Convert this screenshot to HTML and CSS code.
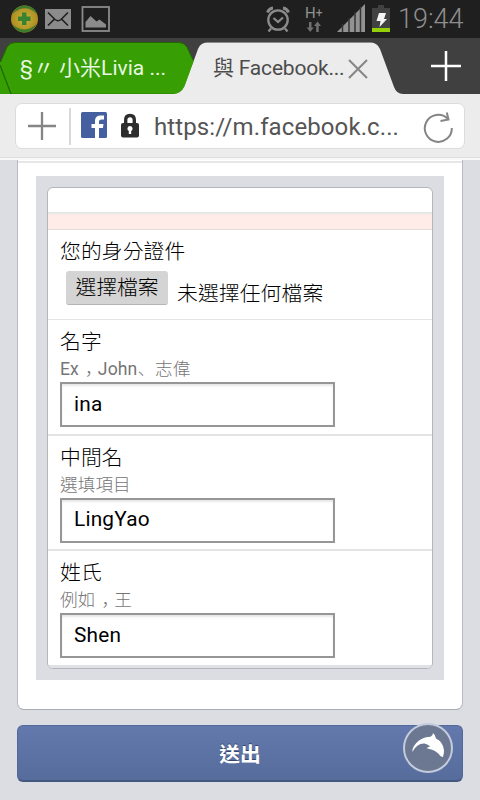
FILE: index.html
```html
<!DOCTYPE html>
<html lang="zh-Hant">
<head>
  <meta charset="UTF-8">
  <meta name="viewport" content="width=device-width, initial-scale=1">
  <title>與 Facebook</title>
  <link rel="stylesheet" href="styles.css">
</head>
<body>
  <header class="status-bar">
    <svg class="status-left" width="120" height="38" viewBox="0 0 120 38">
      <defs>
        <radialGradient id="ball">
          <stop offset="0" stop-color="#c4b83c"/>
          <stop offset="1" stop-color="#b08a20"/>
        </radialGradient>
      </defs>
      <circle cx="24.5" cy="19" r="13.5" fill="url(#ball)"/>
      <path d="M12 15Q16 5 26 5.6Q35 7 37 14Q29 6 20 9Q15 11 12 15ZM37 23Q33 33 23 32.5Q15 31 12 24Q19 31 28 29Q34 27 37 23Z" fill="#3e7b2c"/>
      <path d="M22 12.500h4.500v4h4v4.500h-4v4H22v-4h-4v-4.500h4z" fill="#3a8230"/>
      <rect x="45" y="9" width="26" height="20" fill="#8b8b8b"/>
      <path d="M48 12.5l7 7q3 2.5 6 0l7-7M48 25.5l6-6M68 25.5l-6-6" fill="none" stroke="#1f1f1f" stroke-width="1.6"/>
      <rect x="82.5" y="7" width="26.5" height="24" fill="none" stroke="#8b8b8b" stroke-width="1.8"/>
      <path d="M85.5 27.5v-5.5l5-6 6 5.5 3-2 6.500 5v3z" fill="#8b8b8b"/>
    </svg>
    <div class="status-right">
      <svg width="30" height="38" viewBox="0 0 30 38" fill="none" stroke="#8b8b8b" stroke-width="2.300">
        <circle cx="14" cy="20" r="9.700"/>
        <path d="M9.500 18l4.500 4 5-4.500M7 28.500l-2.500 3M21 28.500l2.500 3"/>
        <path d="M3.500 12.500Q5 8.500 9 8M24.500 12.500Q23 8.500 19 8" stroke-width="3"/>
      </svg>
      <div class="network">
        <span>H<sup>+</sup></span>
        <svg width="16" height="12" viewBox="0 0 16 12" fill="#6f6f6f">
          <path d="M3 1h2.500v5.500h2.300L4.200 11 .7 6.500H3zM10.200 11h2.500V5h2.300L11.500.500 8 5h2.200z"/>
        </svg>
      </div>
      <svg class="signal" width="30" height="28" viewBox="0 0 30 28">
        <path d="M0 28L28 0v28z" fill="#929292"/>
        <path d="M5.500 20v8M12 14v14M18 8v20M23.500 3v25" stroke="#343434" stroke-width="1.500"/>
      </svg>
      <svg class="battery" width="18" height="28" viewBox="0 0 18 28">
        <path d="M6 0h6v3h6v20H0V3h6z" fill="#414141"/>
        <rect y="23" width="18" height="4" fill="#94cf08"/>
        <path d="M7 8h7l-2 6h3L7.500 22l1-6H4.500z" fill="#f4f4f4"/>
      </svg>
      <span class="clock">19:44</span>
    </div>
  </header>

  <nav class="tabs">
    <svg class="tab-shapes" width="480" height="56" viewBox="0 0 480 56">
      <path d="M0 24L11 56H0z" fill="#379e03"/>
      <path d="M.5 24L7 9Q10 4.500 15 4.500H179Q184 4.500 187 9L193 22V56H11.500z" fill="#379e03" stroke="#226602"/>
      <path d="M0 56H173Q181 56 184.500 48L198 11Q200.500 4.500 207 4.500H371Q377 4.500 380 11L394 49Q396.500 56 403 56z" fill="#ececec"/>
      <path d="M0 56V24H150L194 22L184.500 48Q181 55.500 173 55.500H11.500z" fill="#379e03"/>
      <path d="M0 27L11 56" stroke="#226602" stroke-width="1.200"/>
      <path d="M207 4.500H371" stroke="#8a8a8a"/>
    </svg>
    <span class="tab tab-other">§〃 <b>小米Livia ...</b></span>
    <span class="tab tab-active">與 Facebook...</span>
    <svg class="tab-close" width="22" height="22" viewBox="0 0 22 22" stroke="#858585" stroke-width="2">
      <path d="M2 2l18 18M20 2L2 20"/>
    </svg>
    <svg class="tab-new" width="30" height="30" viewBox="0 0 30 30" stroke="#fff" stroke-width="2.500">
      <path d="M0 15h30M15 0v30"/>
    </svg>
  </nav>

  <div class="address">
    <div class="address-box">
      <svg width="28" height="28" viewBox="0 0 28 28" stroke="#858585" stroke-width="2.300">
        <path d="M0 14h28M14 0v28"/>
      </svg>
      <i class="divider"></i>
      <svg class="favicon" width="26" height="26" viewBox="0 0 26 26">
        <rect width="26" height="26" rx="1.500" fill="#4460a0"/>
        <path d="M14 26V16h-3.500v-4H14V9q0-5.500 5.500-5.500H23v4h-2.500Q18 7.500 18 9.500V12h4.500l-.600 4H18v10z" fill="#fff"/>
      </svg>
      <svg class="lock" width="18" height="25" viewBox="0 0 18 25">
        <path d="M4.700 12V7q0-4.500 4.300-4.500t4.300 4.500v5" fill="none" stroke="#2d2d2d" stroke-width="3.400"/>
        <rect y="10" width="18" height="14.500" rx="2" fill="#2d2d2d"/>
        <path d="M9 13a2.600 2.600 0 0 1 1.200 4.900V21H7.800v-3.100A2.600 2.600 0 0 1 9 13z" fill="#fff"/>
      </svg>
      <span class="url">https://m.facebook.c...</span>
      <svg class="reload" width="32" height="34" viewBox="0 0 32 34" fill="none" stroke="#858585" stroke-width="2">
        <path d="M28.800 19A13.500 13.500 0 1 1 24.500 9.500"/>
        <path d="M23.800 3.500L25.500 10.500l-8 1.500"/>
      </svg>
    </div>
  </div>

  <main class="page">
    <div class="card">
      <div class="frame">
        <form class="form">
          <div class="form-head"></div>
          <div class="form-error"></div>
          <div class="row row-file">
            <label>您的身分證件</label>
            <div class="file">
              <button type="button">選擇檔案</button>
              <span>未選擇任何檔案</span>
            </div>
          </div>
          <div class="row">
            <label>名字</label>
            <small><b>Ex</b><i class="comma" lang="ja">，</i><b>John</b><i class="pause" lang="ja">、</i>志偉</small>
            <input type="text" value="ina">
          </div>
          <div class="row">
            <label>中間名</label>
            <small>選填項目</small>
            <input type="text" value="LingYao">
          </div>
          <div class="row row-last">
            <label>姓氏</label>
            <small>例如<i class="comma" lang="ja">，</i>王</small>
            <input type="text" value="Shen">
          </div>
        </form>
      </div>
    </div>
    <button class="submit">送出</button>
    <svg class="dolphin" width="52" height="52" viewBox="0 0 52 52">
      <circle cx="26" cy="26" r="24" fill="#6c7891" stroke="#c3cbdc" stroke-width="2"/>
      <path d="M10.300 30Q10 24 17 18.500Q22 15 28.500 14.800Q31 14 31 11Q33.500 13 34 16.500Q41 20 42 28Q42.200 31 41 35Q39 35 36.300 31.500Q33 28.500 29.500 27.500Q27 27 24.500 26L28 24.500Q26.500 22.500 22.500 21.500Q15 21 10.300 30Z" fill="#fff"/>
    </svg>
  </main>
</body>
</html>
```

FILE: styles.css
```css
* {
  box-sizing: border-box;
}
body {
  margin: 0;
  width: 480px;
  height: 800px;
  overflow: hidden;
  background: #dcdde2;
  font-family: Roboto, "Noto Sans CJK TC", sans-serif;
}
svg {
  display: block;
  flex: none;
}
i {
  font-style: normal;
}

.status-bar {
  height: 38px;
  background: #1f1f1f;
  display: flex;
  justify-content: space-between;
}
.status-right {
  display: flex;
  align-items: flex-start;
  padding-right: 15px;
}
.network {
  width: 20px;
  margin: 5px 12px 0 11px;
  color: #929292;
  font-size: 15px;
  line-height: 16px;
}
.network span {
  display: block;
  white-space: nowrap;
}
.network sup {
  font-size: 12px;
  line-height: 0;
  vertical-align: 1px;
}
.network svg {
  margin-left: 1px;
}
.signal {
  margin-top: 4px;
}
.battery {
  margin: 5px 8px 0 5px;
}
.clock {
  width: 67px;
  color: #8e8e8e;
  font-size: 27px;
  font-weight: 300;
  line-height: 39px;
}

.tabs {
  position: relative;
  height: 56px;
  background: #404040;
  display: flex;
  align-items: center;
}
.tab-shapes {
  position: absolute;
  left: 0;
  top: 0;
}
.tab {
  position: relative;
  font-size: 21px;
  line-height: 30px;
  white-space: nowrap;
  padding-top: 4px;
}
.tab-other {
  width: 193px;
  margin-left: 20px;
  color: #e9f8e2;
}
.tab b,
.row b {
  font-weight: 400;
}
.tab-active {
  width: 134px;
  color: #4c4c4c;
  letter-spacing: -.2px;
}
.tab-close {
  position: relative;
  top: 3px;
}
.tab-new {
  position: relative;
  margin-left: 62px;
}

.address {
  height: 66px;
  padding: 9px 15px 0;
  background: #ececec;
  border-bottom: 2px solid #f8f8f8;
  box-shadow: inset 0 -1px #dedede;
}
.address-box {
  height: 46px;
  padding-left: 12px;
  display: flex;
  align-items: center;
  background: #fff;
  border: 1px solid #dcdcdc;
  border-radius: 7px;
}
.divider {
  width: 2px;
  height: 37px;
  margin: 0 10px 0 13px;
  background: #d9d9d9;
}
.favicon {
  margin-top: -2px;
}
.lock {
  margin: -2px 15px 0 14px;
}
.url {
  width: 268px;
  padding-top: 2px;
  color: #555;
  font-size: 24px;
  letter-spacing: .1px;
  white-space: nowrap;
}
.reload {
  margin-left: 1px;
}

.page {
  position: relative;
  padding: 0 17px;
}
.card {
  height: 550px;
  padding: 13px 18px 0;
  background: linear-gradient(#fff 1px, #e6e6e6 1px, #e6e6e6 3px, #fff 3px);
  border: 1px solid #b9bac2;
  border-top: 0;
  border-radius: 0 0 7px 7px;
  border-bottom-color: #a9aab0;
}
.frame {
  height: 504px;
  margin-top: 3px;
  padding: 11px 11px 0;
  background: #dcdde2;
}
.form {
  width: 386px;
  height: 482px;
  overflow: hidden;
  background: #fff;
  border: 1px solid #b5b6bc;
  border-radius: 6px;
}
.form-head {
  height: 26px;
  border-bottom: 2px solid #e4e8e4;
}
.form-error {
  height: 16px;
  background: #ffebe8;
  border-bottom: 1px solid #e8dcda;
}
.row {
  height: 115.5px;
  padding: 10px 12px 0;
  border-bottom: 2px solid #e4e4e4;
  line-height: 25px;
}
.row label {
  display: block;
  color: #000;
  font-size: 20.8px;
  font-weight: 300;
  letter-spacing: .1px;
}
.row small {
  display: block;
  height: 27px;
  color: #757575;
  font-size: 17.6px;
  font-weight: 300;
  line-height: 28px;
  letter-spacing: .1px;
  white-space: nowrap;
}
.row-file {
  height: 90px;
  border-bottom-width: 1px;
}
.file {
  display: flex;
  padding: 6px 0 0 6px;
  font-size: 20.8px;
  font-weight: 300;
}
.file button {
  width: 102px;
  height: 34px;
  padding: 0;
  font: inherit;
  line-height: 30px;
  background: #d4d4d4;
  border: 0;
  border-bottom: 1px solid #b4b4b4;
  border-radius: 3px;
}
.file span {
  margin: 11px 0 0 9px;
  letter-spacing: .1px;
}
.row input {
  display: block;
  width: 275px;
  height: 45px;
  padding: 0 12px 2px;
  border: 2px solid #969696;
  background: #fff;
  box-shadow: inset 0 2px 2px #e8e8e8;
  color: #000;
  font: 20.8px Roboto, sans-serif;
  letter-spacing: .2px;
}
.row-last {
  height: 117px;
  border-bottom: 3px solid #e0e1e6;
}
.submit {
  display: block;
  width: 446px;
  height: 57px;
  margin-top: 15px;
  padding: 0;
  background: linear-gradient(#6379ad, #566c9b);
  border: 1px solid #53699c;
  border-bottom: 2px solid #44577f;
  border-radius: 6px;
  color: #fff;
  font: bold 20.8px Roboto, "Noto Sans CJK TC", sans-serif;
  text-shadow: 0 -1px #35466c;
}
.dolphin {
  position: absolute;
  left: 402px;
  top: 562px;
}
.comma,
.pause {
  font-family: "Noto Sans CJK JP", sans-serif;
  line-height: 1;
}
.comma {
  padding: 0 4px 0 6px;
  font-feature-settings: "halt";
}
```
